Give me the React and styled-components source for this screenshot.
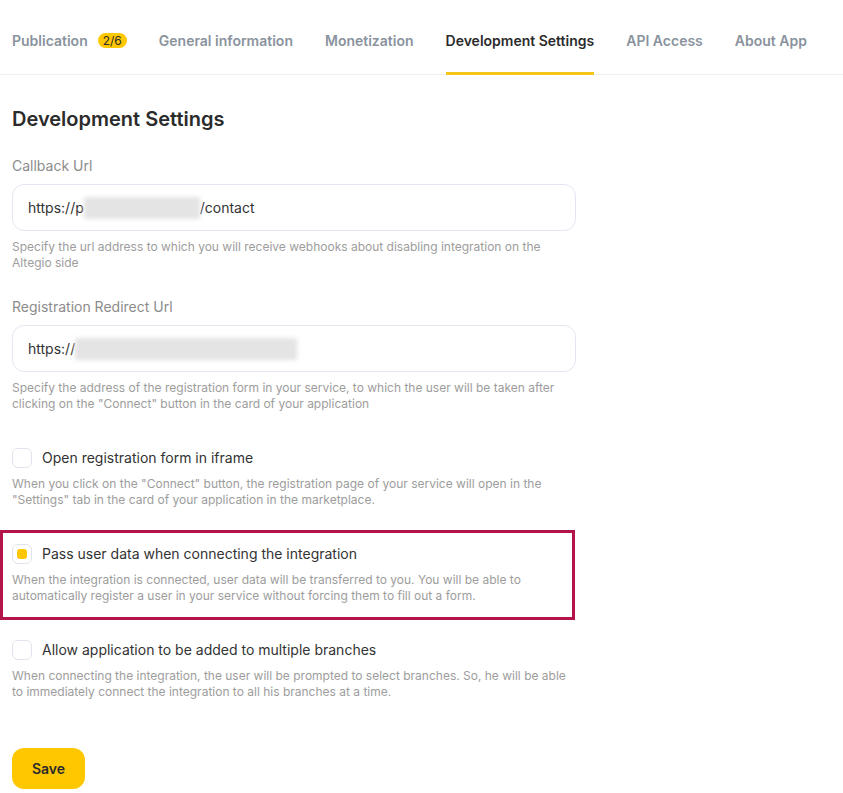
import { createGlobalStyle, styled } from 'styled-components'

const GlobalStyle = createGlobalStyle`
  html, body {
    margin: 0;
    padding: 0;
    background: #ffffff;
    font-family: Inter, "Noto Sans", sans-serif;
  }
`

const Page = styled.div`
  width: 843px;
  min-height: 793px;
  background: #fff;
`

const TabBar = styled.div`
  display: flex;
  gap: 32px;
  height: 75px;
  padding-left: 12px;
  border-bottom: 1px solid #eef0f3;
  box-sizing: border-box;
`

const Tab = styled.div`
  display: flex;
  align-items: flex-start;
  gap: 10px;
  padding-top: 31px;
  height: 75px;
  box-sizing: border-box;
  font-size: 14px;
  line-height: 20px;
  font-weight: 600;
  color: ${p => (p.$active ? '#2b2b2b' : '#8a939d')};
  border-bottom: 3px solid ${p => (p.$active ? '#f5c518' : 'transparent')};
  margin-bottom: -1px;
  white-space: nowrap;
`

const Badge = styled.span`
  display: inline-block;
  margin-top: 2px;
  padding: 0 5px;
  height: 15px;
  line-height: 15px;
  border-radius: 8px;
  background: #ffc700;
  color: #2b2b2b;
  font-size: 12px;
  font-weight: 400;
`

const Content = styled.div`
  width: 564px;
  padding: 30px 0 0 12px;
  display: flex;
  flex-direction: column;
`

const Heading = styled.h1`
  margin: 0 0 23px;
  font-size: 20px;
  line-height: 28px;
  font-weight: 600;
  color: #2b2b2b;
`

const Field = styled.div`
  display: flex;
  flex-direction: column;
  margin-bottom: ${p => p.$mb || 0}px;
`

const Label = styled.div`
  font-size: 14px;
  line-height: 20px;
  color: #8c8c8c;
  margin-bottom: 8px;
`

const InputBox = styled.div`
  height: 47px;
  box-sizing: border-box;
  border: 1.5px solid #e3e7f0;
  border-radius: 12px;
  padding: 0 15px;
  display: flex;
  align-items: center;
  font-size: 14px;
  color: #333;
`

const Blur = styled.span`
  display: inline-block;
  width: ${p => p.$w}px;
  height: 22px;
  background: #e4e4e4;
  filter: blur(2px);
`

const Help = styled.div`
  margin-top: 8px;
  font-size: 12px;
  line-height: 16px;
  color: #9d9d9d;
`

const Options = styled.div`
  display: flex;
  flex-direction: column;
  gap: 36px;
`

const Option = styled.div`
  display: flex;
  flex-direction: column;
  ${p =>
    p.$highlight &&
    `
    margin: -14px 0 -16px -12px;
    padding: 11px 0 13px 9px;
    border: 3px solid #b3144c;
    width: 575px;
    box-sizing: border-box;
  `}
`

const CheckRow = styled.label`
  display: flex;
  align-items: center;
  gap: 10px;
  font-size: 14px;
  line-height: 20px;
  color: #333;
`

const Box = styled.span`
  width: 20px;
  height: 20px;
  box-sizing: border-box;
  border: 1.5px solid #e0e3eb;
  border-radius: 6px;
  display: flex;
  align-items: center;
  justify-content: center;
  flex-shrink: 0;

  &::after {
    content: '';
    display: ${p => (p.$checked ? 'block' : 'none')};
    width: 10px;
    height: 10px;
    border-radius: 3px;
    background: #ffc700;
  }
`

const SaveButton = styled.button`
  margin-top: 48px;
  width: 73px;
  height: 41px;
  border: none;
  border-radius: 12px;
  background: #ffc700;
  color: #2b2b2b;
  font-family: Inter, sans-serif;
  font-size: 14px;
  font-weight: 600;
  cursor: pointer;
`

const tabs = ['General information', 'Monetization', 'Development Settings', 'API Access', 'About App']

const options = [
  {
    label: 'Open registration form in iframe',
    help: 'When you click on the "Connect" button, the registration page of your service will open in the "Settings" tab in the card of your application in the marketplace.',
  },
  {
    label: 'Pass user data when connecting the integration',
    help: 'When the integration is connected, user data will be transferred to you. You will be able to automatically register a user in your service without forcing them to fill out a form.',
    checked: true,
    highlight: true,
  },
  {
    label: 'Allow application to be added to multiple branches',
    help: 'When connecting the integration, the user will be prompted to select branches. So, he will be able to immediately connect the integration to all his branches at a time.',
  },
]

function App() {
  return (
    <>
      <GlobalStyle />
      <Page>
        <TabBar>
          <Tab>
            Publication <Badge>2/6</Badge>
          </Tab>
          {tabs.map(t => (
            <Tab key={t} $active={t === 'Development Settings'}>
              {t}
            </Tab>
          ))}
        </TabBar>
        <Content>
          <Heading>Development Settings</Heading>
          <Field $mb={26}>
            <Label>Callback Url</Label>
            <InputBox>
              https://p<Blur $w={116} />/contact
            </InputBox>
            <Help>
              Specify the url address to which you will receive webhooks about disabling integration on the Altegio side
            </Help>
          </Field>
          <Field $mb={36}>
            <Label>Registration Redirect Url</Label>
            <InputBox>
              https://<Blur $w={222} />
            </InputBox>
            <Help>
              Specify the address of the registration form in your service, to which the user will be taken after
              clicking on the "Connect" button in the card of your application
            </Help>
          </Field>
          <Options>
            {options.map(o => (
              <Option key={o.label} $highlight={o.highlight}>
                <CheckRow>
                  <Box $checked={o.checked} />
                  {o.label}
                </CheckRow>
                <Help>{o.help}</Help>
              </Option>
            ))}
          </Options>
          <div>
            <SaveButton>Save</SaveButton>
          </div>
        </Content>
      </Page>
    </>
  )
}

export default App
